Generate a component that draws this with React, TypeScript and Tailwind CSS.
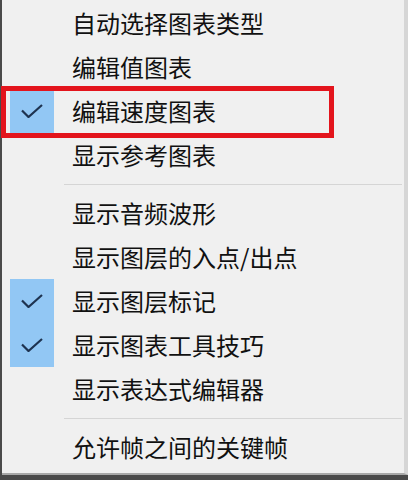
type Item = { label: string; checked?: boolean };

const groups: Item[][] = [
  [
    { label: "自动选择图表类型" },
    { label: "编辑值图表" },
    { label: "编辑速度图表", checked: true },
    { label: "显示参考图表" },
  ],
  [
    { label: "显示音频波形" },
    { label: "显示图层的入点/出点" },
    { label: "显示图层标记", checked: true },
    { label: "显示图表工具技巧", checked: true },
    { label: "显示表达式编辑器" },
  ],
  [{ label: "允许帧之间的关键帧" }],
];

function Check() {
  return (
    <svg width="22" height="14" viewBox="0 0 22 14" fill="none">
      <path d="M1 6.5 L7.5 13 L21 1" stroke="#1e3350" strokeWidth="2.2" />
    </svg>
  );
}

function Row({ item }: { item: Item }) {
  return (
    <div className="flex h-[44px] items-center">
      <div
        className={`ml-[8px] flex h-full w-[44px] items-center justify-center ${
          item.checked ? "bg-[#92c7f4]" : ""
        }`}
      >
        {item.checked && <Check />}
      </div>
      <span className="ml-[18px] text-[24px] leading-none text-[#111]">{item.label}</span>
    </div>
  );
}

export default function App() {
  return (
    <div
      className="relative h-[480px] w-[408px] overflow-hidden bg-[#4a4a4a]"
      style={{ fontFamily: '"Microsoft YaHei", "Noto Sans CJK SC", sans-serif' }}
    >
      <div className="ml-[2px] h-[475px] w-[406px] border-b-2 border-r-4 border-b-[#a8a8a8] border-r-[#d6d6d6] bg-[#f0f0f0] pt-[1px]">
        {groups.map((g, gi) => (
          <div key={gi}>
            {gi > 0 && (
              <div className="flex h-[14px] items-center pl-[62px] pr-[2px]">
                <div className="h-px w-full bg-[#d5d5d5]" />
              </div>
            )}
            {g.map((item) => (
              <Row key={item.label} item={item} />
            ))}
          </div>
        ))}
      </div>
      {/* red highlight annotation */}
      <div className="absolute left-[1px] top-[86px] h-[52px] w-[333px] border-[5px] border-[#e3141c]" />
    </div>
  );
}
